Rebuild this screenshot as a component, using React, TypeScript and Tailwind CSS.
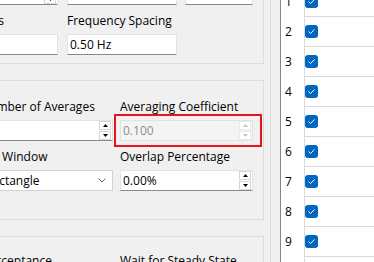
import React from 'react';

type FieldProps = {
  value?: string;
  disabled?: boolean;
  className?: string;
};

function Arrow({ up, disabled }: { up?: boolean; disabled?: boolean }) {
  return (
    <span
      className={`flex h-[9px] w-[12px] items-center justify-center border bg-white ${
        disabled ? 'border-[#e9e9e9] bg-[#f7f7f7] text-[#c2c2c2]' : 'border-[#d6d6d6] text-black'
      }`}
    >
      <svg width="5" height="3" viewBox="0 0 5 3" aria-hidden="true">
        {up ? <polygon points="2.5,0 5,3 0,3" fill="currentColor" /> : <polygon points="0,0 5,0 2.5,3" fill="currentColor" />}
      </svg>
    </span>
  );
}

function LineEdit({ value, className }: FieldProps) {
  return (
    <div
      className={`flex h-[21px] items-center border border-[#e3e3e3] border-b-[#8a8a8a] bg-white pl-[2px] ${className ?? ''}`}
    >
      {value}
    </div>
  );
}

function SpinBox({ value, disabled, className }: FieldProps) {
  return (
    <div
      className={`flex h-[21px] items-center border pl-[2px] pr-[1px] ${
        disabled
          ? 'border-[#e2e2e2] bg-[#f4f4f4] text-[#8d8d8d]'
          : 'border-[#e3e3e3] border-b-[#8a8a8a] bg-white'
      } ${className ?? ''}`}
    >
      <span className="flex-1 truncate">{value}</span>
      <div className="flex flex-col gap-[1px]">
        <Arrow up disabled={disabled} />
        <Arrow disabled={disabled} />
      </div>
    </div>
  );
}

function ComboBox({ value }: { value: string }) {
  return (
    <div className="flex h-[21px] items-center border border-[#d2d2d2] bg-white pl-[4px] pr-[6px]">
      <span className="flex-1">{value}</span>
      <svg width="8" height="5" viewBox="0 0 8 5" aria-hidden="true" className="text-[#5f5f5f]">
        <polyline points="0.5,0.5 4,4 7.5,0.5" fill="none" stroke="currentColor" strokeWidth="1" />
      </svg>
    </div>
  );
}

function Label({ children }: { children: React.ReactNode }) {
  return <div className="h-[16px] whitespace-nowrap leading-[16px]">{children}</div>;
}

function CheckBox() {
  return (
    <span className="flex h-[13px] w-[13px] items-center justify-center rounded-[3px] bg-[#0067c0]">
      <svg width="9" height="7" viewBox="0 0 9 7" aria-hidden="true">
        <polyline points="1.5,3.5 3.5,5.5 7.5,1.5" fill="none" stroke="white" strokeWidth="1" />
      </svg>
    </span>
  );
}

const rows = [1, 2, 3, 4, 5, 6, 7, 8, 9, 10];

export default function App() {
  return (
    <div className="flex h-[262px] w-[374px] overflow-hidden bg-[#f0f0f0] font-['Open_Sans',sans-serif] text-[12px] text-black">
      {/* settings pane */}
      <div className="w-[271px] shrink-0 overflow-hidden border-r border-[#dcdcdc]">
        <div className="-mt-[16px] ml-[-31px] flex w-[295px] flex-col">
          {/* spectrum group */}
          <div className="border-x border-b border-[#dcdcdc] px-[10px] pb-[8px]">
            <div className="flex">
              <SpinBox className="w-[78px]" />
              <LineEdit className="ml-[9px] w-[110px]" />
              <LineEdit className="ml-[8px] w-[68px]" />
            </div>
            <div className="mt-[8px] flex">
              <div className="w-[78px]">
                <Label>Bins</Label>
              </div>
              <div className="ml-[9px] w-[110px]">
                <Label>Frequency Spacing</Label>
              </div>
            </div>
            <div className="mt-[5px] flex">
              <LineEdit className="w-[78px]" />
              <LineEdit value="0.50 Hz" className="ml-[9px] w-[110px]" />
            </div>
          </div>

          {/* averaging group */}
          <div className="mt-[16px] border border-[#dcdcdc] px-[10px] pt-[18px] pb-[28px]">
            <div className="grid grid-cols-[133px_133px] gap-x-[7px]">
              <Label>Number of Averages</Label>
              <Label>Averaging Coefficient</Label>
              <SpinBox className="mt-[5px]" />
              <div className="relative mt-[5px]">
                <SpinBox value="0.100" disabled />
                <div className="pointer-events-none absolute top-[-6px] left-[-6px] h-[33px] w-[148px] border-2 border-[#e8141c]" />
              </div>
              <div className="mt-[8px]">
                <Label>FFT Window</Label>
              </div>
              <div className="mt-[8px]">
                <Label>Overlap Percentage</Label>
              </div>
              <div className="mt-[5px]">
                <ComboBox value="Rectangle" />
              </div>
              <SpinBox value="0.00%" className="mt-[5px]" />
            </div>
          </div>

          {/* trigger group */}
          <div className="mt-[16px] h-[60px] border border-[#dcdcdc] px-[10px] pt-[16px]">
            <div className="grid grid-cols-[133px_133px] gap-x-[7px]">
              <div className="pl-[8px]">
                <Label>Acceptance</Label>
              </div>
              <Label>Wait for Steady State</Label>
            </div>
          </div>
        </div>
      </div>

      {/* channel list */}
      <div className="ml-[9px] flex-1 border-l border-[#868686] bg-white">
        <div className="-mt-[13px]">
          {rows.map((n) => (
            <div key={n} className="flex h-[30px]">
              <div className="flex w-[23px] items-center pl-[4px] pb-[1px]">{n}</div>
              <div className="flex flex-1 items-center border-b border-l border-[#d9d9d9]">
                <CheckBox />
              </div>
            </div>
          ))}
        </div>
      </div>
    </div>
  );
}
